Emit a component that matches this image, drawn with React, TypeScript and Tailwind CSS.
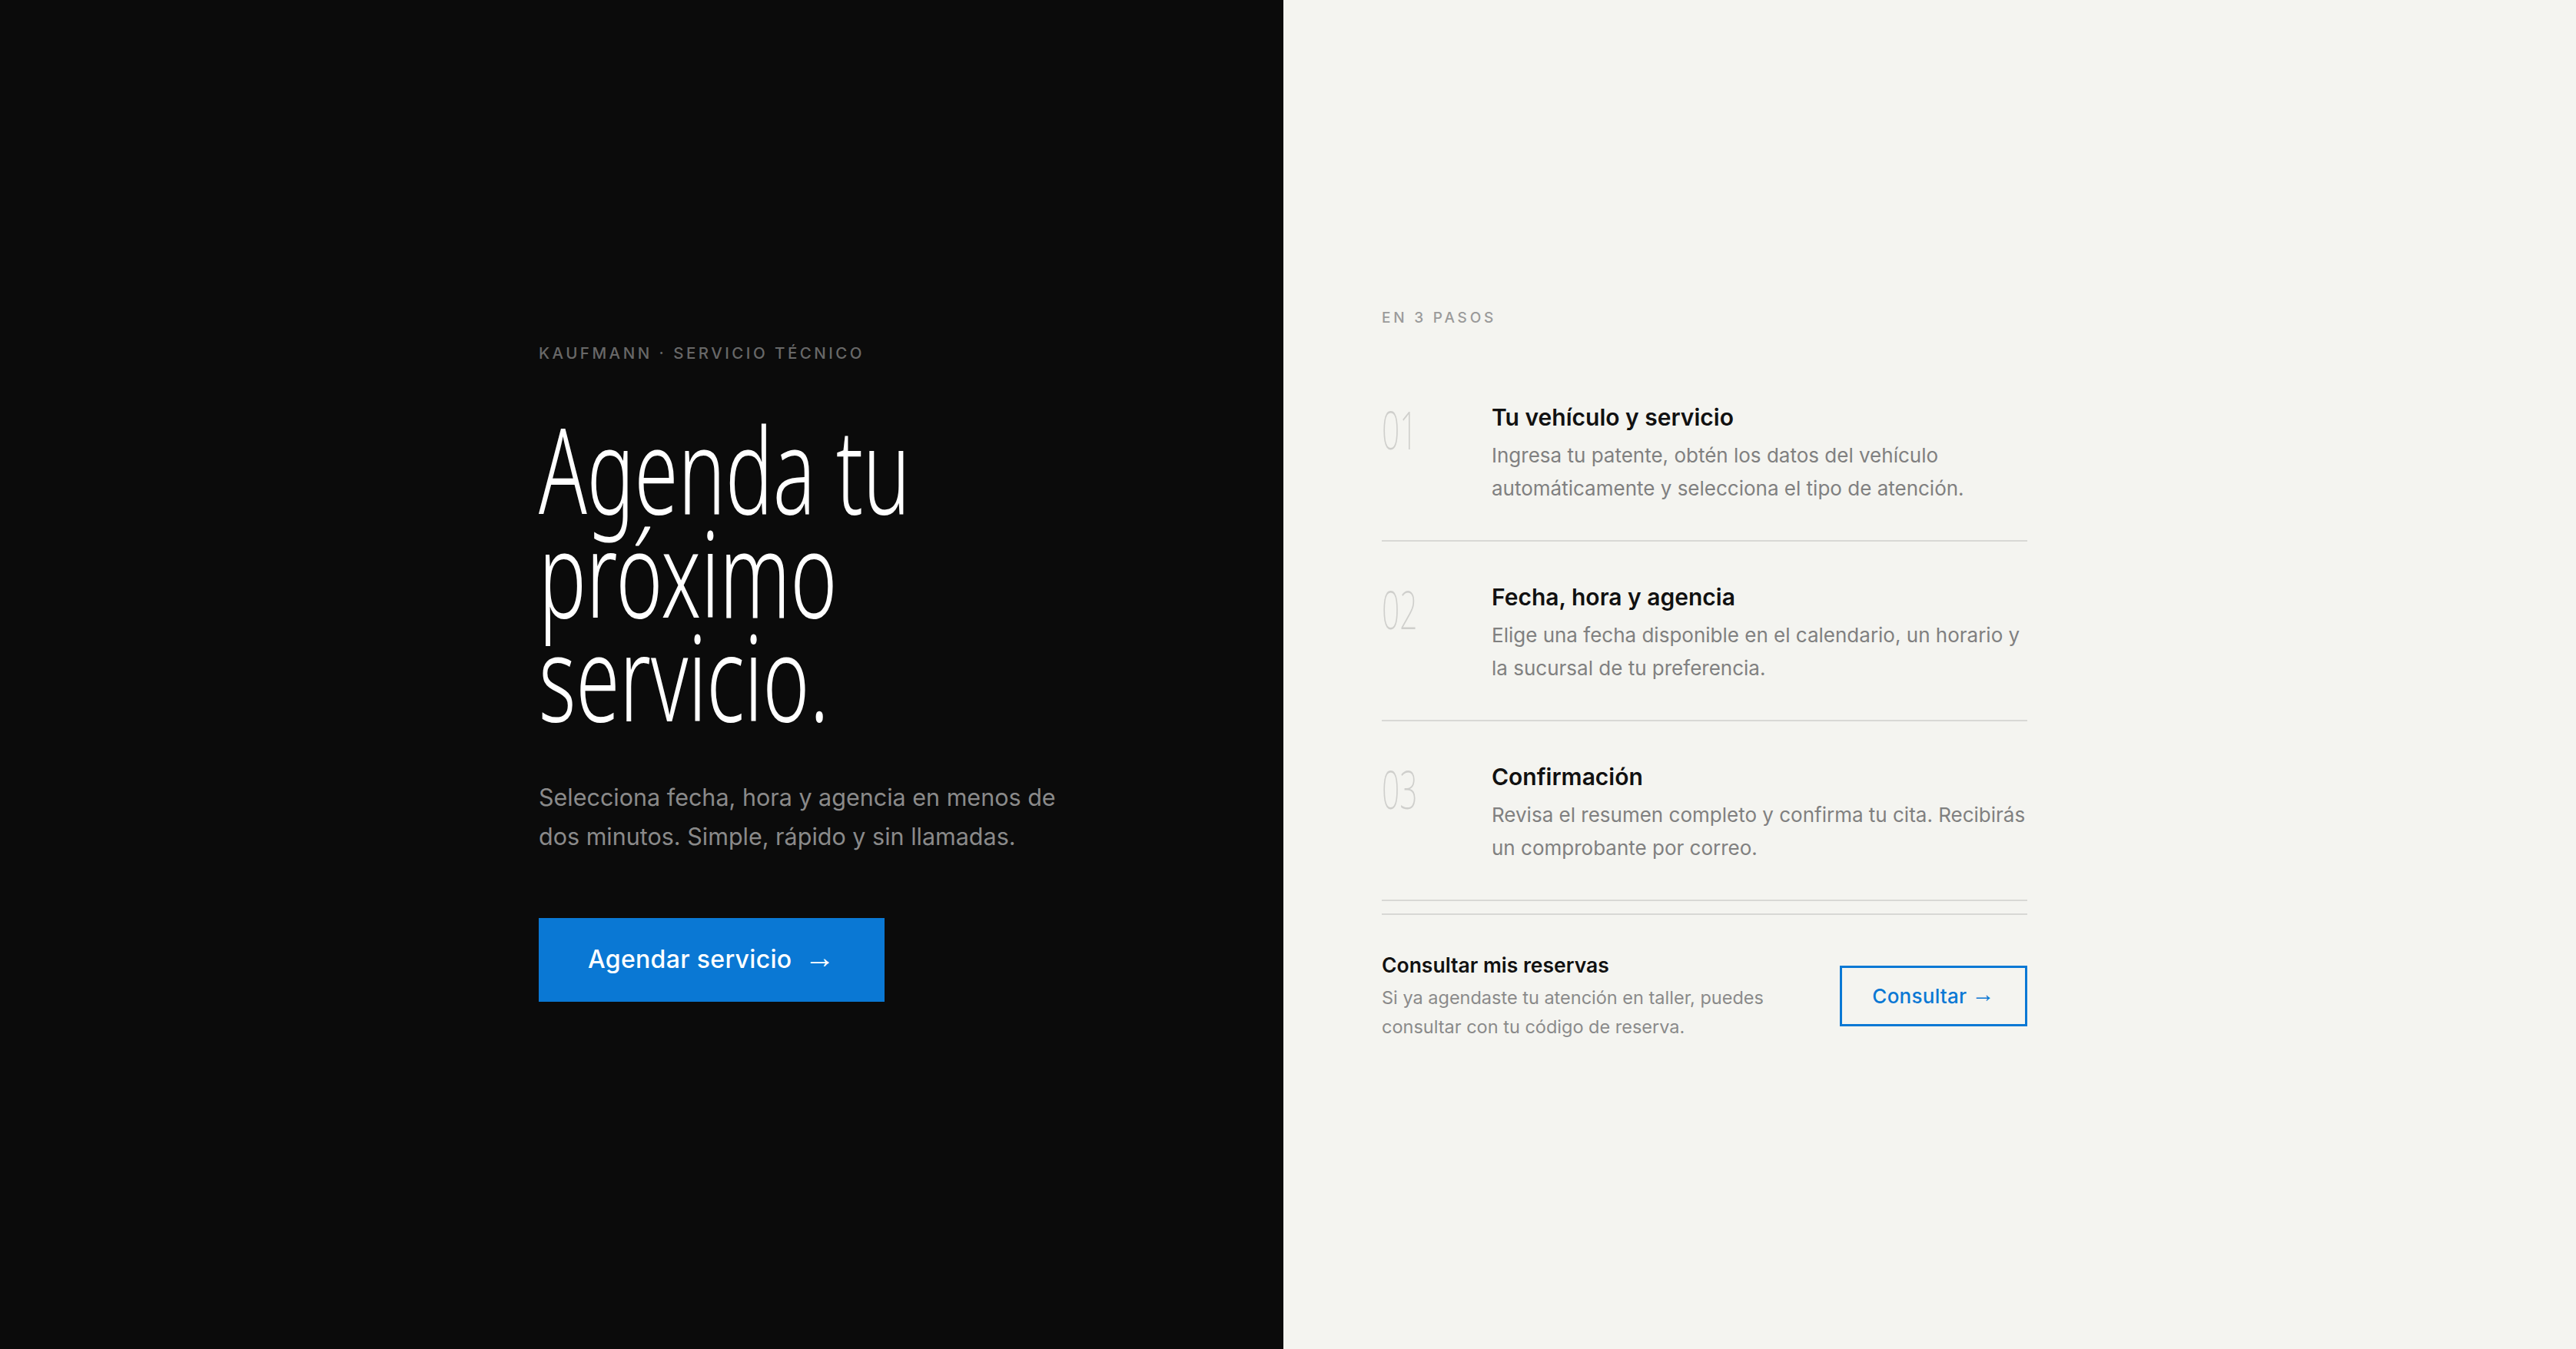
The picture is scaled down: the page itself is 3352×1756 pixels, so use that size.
import React from 'react';

const condensed = { fontFamily: '"Noto Sans", "DejaVu Sans", sans-serif' };
const arrow = { fontFamily: '"Liberation Sans", "DejaVu Sans", sans-serif' };

const steps = [
  {
    n: '01',
    title: 'Tu vehículo y servicio',
    desc: 'Ingresa tu patente, obtén los datos del vehículo automáticamente y selecciona el tipo de atención.',
  },
  {
    n: '02',
    title: 'Fecha, hora y agencia',
    desc: 'Elige una fecha disponible en el calendario, un horario y la sucursal de tu preferencia.',
  },
  {
    n: '03',
    title: 'Confirmación',
    desc: 'Revisa el resumen completo y confirma tu cita. Recibirás un comprobante por correo.',
  },
];

export default function App() {
  return (
    <div className="flex h-[1756px] w-full font-['Inter',sans-serif]">
      {/* left: hero */}
      <div className="flex w-[1670px] shrink-0 items-center justify-end bg-[#0b0b0b]">
        <div className="w-[969px] pb-[7px]">
          <p className="text-[20.5px] leading-[28px] font-medium tracking-[0.17em] text-[#686868]">
            KAUFMANN · SERVICIO TÉCNICO
          </p>
          <h1
            className="mt-[68px] inline-block origin-left scale-x-[0.67] text-[154px] leading-[135px] font-light whitespace-nowrap text-white"
            style={condensed}
          >
            Agenda tu
            <br />
            próximo
            <br />
            servicio.
          </h1>
          <p className="mt-[65px] max-w-[720px] text-[30.5px] leading-[51px] text-[#8a8a8a]">
            Selecciona fecha, hora y agencia en menos de dos minutos. Simple, rápido y sin llamadas.
          </p>
          <button className="mt-[81px] flex h-[109px] items-center gap-[16px] bg-[#0a78d4] px-[64px] text-[32px] font-medium tracking-[0.01em] text-white">
            Agendar servicio
            <span className="pb-[6px] text-[40px] leading-none" style={arrow}>
              →
            </span>
          </button>
        </div>
      </div>

      {/* right: steps */}
      <div className="flex flex-1 items-center bg-[#f4f4f0] pl-[128px]">
        <div className="w-[840px]">
          <p className="text-[19px] leading-[28px] font-medium tracking-[0.2em] text-[#9a9a9a]">EN 3 PASOS</p>
          <div className="mt-[43px]">
            {steps.map((s) => (
              <div key={s.n} className="flex border-b-2 border-[#d8d8d5] pt-[50px] pb-[46px]">
                <div className="w-[143px] shrink-0 pt-[4px]">
                  <span
                    className="inline-block origin-left scale-x-[0.6] text-[68px] leading-[68px] font-extralight text-[#cfcfcc]"
                    style={condensed}
                  >
                    {s.n}
                  </span>
                </div>
                <div>
                  <h3 className="text-[30px] leading-[45px] font-semibold text-[#111111]">{s.title}</h3>
                  <p className="mt-[5px] text-[26px] leading-[43px] text-[#808080]">{s.desc}</p>
                </div>
              </div>
            ))}
          </div>
          <div className="mt-[16px] flex items-center justify-between border-t-2 border-[#d8d8d5] pt-[45px]">
            <div>
              <h4 className="text-[26.5px] leading-[40px] font-semibold text-[#111111]">Consultar mis reservas</h4>
              <p className="mt-[4px] max-w-[530px] text-[23.5px] leading-[38px] text-[#8a8a8a]">
                Si ya agendaste tu atención en taller, puedes consultar con tu código de reserva.
              </p>
            </div>
            <button className="flex h-[79px] w-[244px] items-center justify-center gap-[6px] border-[3px] border-[#0a78d4] text-[26px] font-medium tracking-[0.01em] text-[#0a78d4]">
              Consultar
              <span className="pb-[4px] text-[30px] leading-none" style={arrow}>
                →
              </span>
            </button>
          </div>
        </div>
      </div>
    </div>
  );
}
